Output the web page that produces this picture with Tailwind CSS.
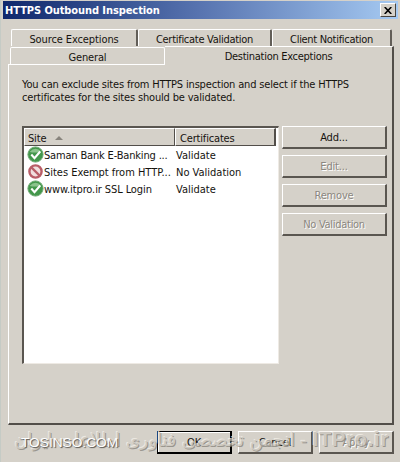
<!DOCTYPE html>
<html lang="en">
<head>
<meta charset="utf-8">
<title>HTTPS Outbound Inspection</title>
<script src="https://cdn.jsdelivr.net/npm/@tailwindcss/browser@4"></script>
</head>
<body class="w-[400px] h-[462px] overflow-hidden bg-[#d5d1c9]">
<div class="relative w-[400px] h-[462px] flex flex-col pt-px pl-[2px] pr-[2px] border-l border-[#c5cbc5] font-['DejaVu_Sans_Condensed','DejaVu_Sans',sans-serif] [font-stretch:condensed] text-[11px] leading-[13px] tracking-[-0.17px] text-[#15130f] whitespace-nowrap">
  <header class="h-[18px] shrink-0 flex items-center justify-between pr-[2px] bg-linear-to-r from-[#10286c] via-[#5874b0] via-50% to-[#a6caf2]">
    <h1 class="font-bold text-white pl-[2px] tracking-[-0.08px]">HTTPS Outbound Inspection</h1>
    <button class="w-4 h-[14px] bg-[#d5d1c9] border border-t-white border-l-white border-r-[#48443f] border-b-[#48443f] flex items-center justify-center" aria-label="Close">
      <svg width="8" height="7" viewBox="0 0 8 7"><path d="M.7 0 7.3 7M7.3 0 .7 7" stroke="#000" stroke-width="1.6"/></svg>
    </button>
  </header>

  <nav class="flex flex-col shrink-0 pt-[10px] pl-[5px]">
    <div class="flex h-[17px] pl-[3px] text-center">
      <div class="w-[127px] border-t border-l border-white border-r-2 border-r-[#625e58] rounded-t-[2px] pt-[3px] tracking-[-0.1px]">Source Exceptions</div>
      <div class="w-[134px] border-t border-l border-white border-r-2 border-r-[#625e58] rounded-t-[2px] pt-[3px] tracking-[-0.28px]">Certificate Validation</div>
      <div class="w-[120px] border-t border-l border-white border-r-2 border-r-[#625e58] rounded-t-[2px] pt-[3px] tracking-[-0.3px]">Client Notification</div>
    </div>
    <div class="flex h-[19px] text-center">
      <div class="w-[157px] pl-[2px] border-b border-white pt-[1px]"><div class="h-[17px] border-t border-l border-r border-white pt-[3px] rounded-t-[2px]">General</div></div>
      <div class="w-[229px] border-t border-white border-r-2 border-r-[#524e49] pt-[3px] tracking-[-0.28px]">Destination Exceptions</div>
    </div>
  </nav>

  <main class="ml-[5px] w-[386px] h-[360px] shrink-0 border-l border-white border-r-2 border-b-2 border-r-[#524e49] border-b-[#524e49] pl-[13px] pt-[13px]">
    <p>You can exclude sites from HTTPS inspection and select if the HTTPS<br>certificates for the sites should be validated.</p>
    <div class="flex mt-[22px] gap-[3px]">
      <div class="w-[257px] h-[238px] bg-white border-t-2 border-l-2 border-t-[#5a5650] border-l-[#5a5650] border-r border-b border-r-[#eeeae4] border-b-[#eeeae4]">
        <div class="h-[18px] flex bg-[#d5d1c9] mr-[2px]">
          <div class="w-[151px] border-t border-l border-white border-r border-b border-r-[#524e49] border-b-[#524e49] pl-[3px] pt-[3px] flex gap-[9px]">Site<svg class="mt-[4px]" width="8" height="4"><path d="M0 4 4 0 8 4Z" fill="#88847d"/></svg></div>
          <div class="flex-1 border-t border-l border-white border-r-2 border-b border-r-[#524e49] border-b-[#524e49] pl-[4px] pt-[3px]">Certificates</div>
        </div>
        <div class="h-[17px] flex items-center pl-[3px]">
          <svg width="17" height="17" viewBox="0 0 17 17"><circle cx="8.5" cy="8.5" r="7.6" fill="#43974b" stroke="#6fa973"/><path d="M2.5 6Q8.5-.5 14.5 6Q8 7 2.5 6" fill="#8bc38c"/><path d="m4.3 8.5 3.2 3.6 5.7-6.6" fill="none" stroke="#fff" stroke-width="2.1"/></svg>
          <span class="w-[132px] pt-px">Saman Bank E-Banking ...</span><span class="pt-px tracking-normal">Validate</span>
        </div>
        <div class="h-[17px] flex items-center pl-[3px]">
          <svg width="17" height="17" viewBox="0 0 17 17"><circle cx="8.5" cy="8.5" r="6.1" fill="#f1dede" stroke="#b95d67" stroke-width="2.4"/><path d="m4.5 4.5 8 8" stroke="#b95d67" stroke-width="2.4"/></svg>
          <span class="w-[132px] pt-px tracking-[-0.02px]">Sites Exempt from HTTP...</span><span class="pt-px tracking-normal">No Validation</span>
        </div>
        <div class="h-[17px] flex items-center pl-[3px]">
          <svg width="17" height="17" viewBox="0 0 17 17"><circle cx="8.5" cy="8.5" r="7.6" fill="#43974b" stroke="#6fa973"/><path d="M2.5 6Q8.5-.5 14.5 6Q8 7 2.5 6" fill="#8bc38c"/><path d="m4.3 8.5 3.2 3.6 5.7-6.6" fill="none" stroke="#fff" stroke-width="2.1"/></svg>
          <span class="w-[132px] pt-px tracking-[-0.1px]">www.itpro.ir SSL Login</span><span class="pt-px tracking-normal">Validate</span>
        </div>
      </div>
      <div class="flex flex-col gap-[6px] w-[105px]">
        <button class="h-[23px] border border-white border-r-2 border-b-2 border-r-[#5a5650] border-b-[#5a5650]">Add...</button>
        <button class="h-[23px] border border-white border-r-2 border-b-2 border-r-[#5a5650] border-b-[#5a5650] text-[#8b8780] [text-shadow:1px_1px_0_#fff]">Edit...</button>
        <button class="h-[23px] border border-white border-r-2 border-b-2 border-r-[#5a5650] border-b-[#5a5650] text-[#8b8780] [text-shadow:1px_1px_0_#fff]">Remove</button>
        <button class="h-[23px] border border-white border-r-2 border-b-2 border-r-[#5a5650] border-b-[#5a5650] text-[#8b8780] tracking-[-0.28px] [text-shadow:1px_1px_0_#fff]">No Validation</button>
      </div>
    </div>
  </main>

  <footer class="flex gap-[6px] pt-[6px] pl-[154px]">
    <button class="w-[75px] h-[23px] border border-black border-r-2 border-b-2 shadow-[inset_1px_1px_0_#fff]">OK</button>
    <button class="w-[75px] h-[23px] border border-white border-r-2 border-b-2 border-r-[#5a5650] border-b-[#5a5650]">Cancel</button>
    <button class="w-[75px] h-[23px] border border-white border-r-2 border-b-2 border-r-[#5a5650] border-b-[#5a5650] text-[#8b8780] [text-shadow:1px_1px_0_#fff]">Apply</button>
  </footer>

  <div dir="rtl" class="absolute right-[11px] top-[427px] h-[24px] leading-[24px] font-['DejaVu_Sans',sans-serif] [font-stretch:normal] tracking-normal text-[17.8px] text-[#cbc7bf] opacity-75 [text-shadow:1px_1px_0_#85817a,-1px_-1px_0_#f3f0ea]"><span class="text-[20px] font-bold [font-family:'Liberation_Sans'] tracking-[0.8px]">ITPro.ir</span> - انجمن تخصصی فناوری اطلاعات ایران</div>
  <div class="absolute left-[20px] top-[434px] leading-[18px] font-['Liberation_Sans',sans-serif] tracking-normal text-[13.7px] text-white [text-shadow:1px_1px_1px_#55524d]">TOSINSO.COM</div>
</div>
</body>
</html>
